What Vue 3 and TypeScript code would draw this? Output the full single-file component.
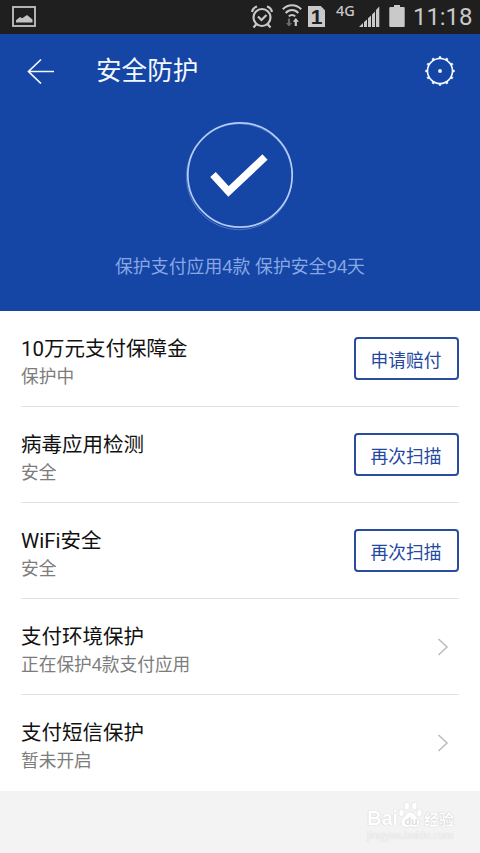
<script setup lang="ts">
interface Item {
  title: string
  note: string
  action?: string
}

const items: Item[] = [
  { title: '10万元支付保障金', note: '保护中', action: '申请赔付' },
  { title: '病毒应用检测', note: '安全', action: '再次扫描' },
  { title: 'WiFi安全', note: '安全', action: '再次扫描' },
  { title: '支付环境保护', note: '正在保护4款支付应用' },
  { title: '支付短信保护', note: '暂未开启' },
]

const teeth: number[] = Array.from({ length: 12 }, (_, i) => i * 30)
</script>

<template>
  <div class="screen">
    <div class="status">
      <svg class="picture" width="24" height="21" viewBox="0 0 24 21">
        <rect x="1" y="1" width="22" height="19" fill="none" stroke="#c3c3c3" stroke-width="1.8" />
        <path d="M4 16.5v-2.200l4-3.300 2.200 1.300L15 9l5.500 4.500v3z" fill="#c3c3c3" />
      </svg>
      <div class="indicators">
        <svg class="alarm" width="22" height="24" viewBox="0 0 22 24" fill="none" stroke="#c9c9c9" stroke-width="2.2">
          <circle cx="11" cy="12.5" r="8.5" />
          <path d="M7 11.5l3.500 3.500 5-5M1 7a7 7 0 0 1 5-5.500M21 7a7 7 0 0 0-5-5.500M5.500 19l-3 3.500M16.500 19l3 3.500" />
        </svg>
        <svg class="wifi" width="20" height="24" viewBox="0 0 20 24">
          <g fill="none" stroke="#c9c9c9" stroke-width="2">
            <path d="M.8 5.200C6-.2 14-.2 19.200 5.200M3.700 9c3.600-3.900 9-3.900 12.600 0M6.800 12.400c1.900-2 4.500-2 6.400 0" />
          </g>
          <path d="M5.900 14.500h2.200v4.500h2L7 22.500 3.900 19h2z" fill="#6b6b6b" />
          <path d="M12.700 22v-4.300h-2l3.100-3.700 3.100 3.700h-2V22z" fill="#c9c9c9" />
        </svg>
        <div class="sim">1</div>
        <div class="network">4G</div>
        <svg class="signal" width="21" height="22" viewBox="0 0 21 22" fill="#c9c9c9">
          <path d="M0 21l4-4v4zM5 16l3-2.500V21H5zM9 12.200l3-2.700V21H9zM13 8.500l3-3V21h-3zM17 4l3.300-3.500V21H17z" />
        </svg>
        <svg class="battery" width="16" height="22" viewBox="0 0 16 22">
          <path d="M5 0h6v2h3.700q1 0 1 1v18q0 1-1 1H1.300q-1 0-1-1V3q0-1 1-1H5z" fill="#c9c9c9" />
        </svg>
        <div class="clock">11:18</div>
      </div>
    </div>

    <header class="hero">
      <div class="bar">
        <svg class="back" width="28" height="26" viewBox="0 0 28 26" fill="none" stroke="#f3f8ff" stroke-width="1.7">
          <path d="M27 13.500H1.500M14 1.500l-12.500 12 12.500 12" />
        </svg>
        <h1>安全防护</h1>
        <svg class="gear" width="30" height="30" viewBox="0 0 30 30">
          <circle cx="15" cy="15" r="12.5" fill="none" stroke="#f3f8ff" stroke-width="1.6" />
          <circle cx="15" cy="15" r="1.9" fill="#f3f8ff" />
          <path
            v-for="angle in teeth"
            :key="angle"
            d="M13.700 2.500L14.300.5h1.400l.6 2z"
            fill="#f3f8ff"
            stroke="#f3f8ff"
            stroke-width=".6"
            :transform="`rotate(${angle} 15 15)`"
          />
        </svg>
      </div>
      <svg class="shield" width="110" height="112" viewBox="0 0 110 112" fill="none">
        <circle cx="54.3" cy="56.7" r="53" stroke="#5d83cc" stroke-width=".8" />
        <circle cx="55" cy="55" r="52.2" stroke="#b4ccf7" stroke-width="1.7" />
        <path d="M28 54.500L43.500 71.500 80 37" stroke="#fff" stroke-width="7.500" />
      </svg>
      <p>保护支付应用4款 保护安全94天</p>
    </header>

    <main class="list">
      <section v-for="item in items" :key="item.title" class="row">
        <div class="copy">
          <h2>{{ item.title }}</h2>
          <span>{{ item.note }}</span>
        </div>
        <button v-if="item.action" type="button">{{ item.action }}</button>
        <svg v-else class="chevron" width="12" height="18" viewBox="0 0 12 18">
          <path d="M1.500 1l8.500 8-8.500 8" fill="none" stroke="#bdbdbd" stroke-width="1.6" />
        </svg>
      </section>
    </main>

    <footer class="foot">
      <div class="mark">
        <div class="brand">
          <span class="bai">Bai</span>
          <svg width="25" height="28" viewBox="0 0 25 28" fill="#fff" stroke="#e0e0e0" stroke-width=".7">
            <ellipse cx="3.5" cy="12" rx="2.8" ry="3.7" />
            <ellipse cx="9" cy="5" rx="2.9" ry="4" />
            <ellipse cx="16.5" cy="5" rx="2.9" ry="4" />
            <ellipse cx="21.5" cy="12" rx="2.8" ry="3.7" />
            <path d="M12.500 11c4 0 4.800 4 7.300 6.300 3.600 3.500 1.900 9-2.500 9-2 0-3-.5-4.800-.5s-2.800.5-4.800.5c-4.400 0-6.100-5.500-2.500-9C7.700 15 8.500 11 12.500 11z" />
            <text x="6.5" y="24" class="du">du</text>
          </svg>
          <span class="cn">经验</span>
        </div>
        <div class="site">jingyan.baidu.com</div>
      </div>
    </footer>
  </div>
</template>

<style>
body {
  margin: 0;
  background: #f3f3f3;
}
</style>

<style scoped>
.screen {
  width: 480px;
  height: 853px;
  overflow: hidden;
  display: flex;
  flex-direction: column;
  background: #f3f3f3;
  font-family: "Noto Sans", "Noto Sans CJK SC", sans-serif;
}

.status {
  height: 34px;
  flex: none;
  display: flex;
  justify-content: space-between;
  background: #1f1f1f;
  padding: 0 8px 0 12px;
  font-family: Roboto, sans-serif;
}

.picture {
  margin-top: 6px;
}

.indicators {
  display: flex;
  align-items: flex-start;
  color: #c9c9c9;
}

.alarm {
  margin: 5px 9px 0 0;
}

.wifi {
  margin: 4px 6px 0 0;
}

.sim {
  width: 17px;
  height: 21px;
  margin: 6px 11px 0 0;
  background: #c9c9c9;
  clip-path: polygon(0 0, 75% 0, 100% 20%, 100% 100%, 0 100%);
  color: #1f1f1f;
  font: bold 21px/22px "Liberation Sans", sans-serif;
  text-align: center;
}

.network {
  width: 19px;
  margin: 3px 4px 0 0;
  font: 500 14.5px/15px "Noto Sans", sans-serif;
}

.signal {
  margin: 6px 9px 0 0;
}

.battery {
  margin: 5px 8px 0 0;
}

.clock {
  width: 59px;
  font-size: 24px;
  line-height: 34px;
  letter-spacing: -0.1px;
}

.hero {
  height: 277px;
  flex: none;
  display: flex;
  flex-direction: column;
  align-items: center;
  background: #1545a5;
}

.bar {
  width: 100%;
  height: 74px;
  box-sizing: border-box;
  padding: 0 25px 0 27px;
  display: flex;
  align-items: center;
}

.bar h1 {
  flex: 1;
  margin: -1px 0 0 41px;
  font-size: 25.6px;
  line-height: 36px;
  font-weight: 400;
  color: #f3f8ff;
}

.shield {
  margin-top: 12px;
}

.hero p {
  margin: 21px 0 0;
  font-size: 17.9px;
  line-height: 26px;
  color: #88a8e3;
}

.list {
  height: 480px;
  flex: none;
  padding: 0 21px;
  background: #fff;
}

.row {
  height: 96px;
  box-sizing: border-box;
  border-bottom: 1px solid #e2e2e2;
  display: flex;
  align-items: center;
  justify-content: space-between;
}

.row:last-child {
  border-bottom-color: transparent;
}

.copy {
  display: flex;
  flex-direction: column;
  padding-top: 7px;
}

.copy h2 {
  margin: 0;
  font-family: Roboto, "Noto Sans CJK SC", sans-serif;
  font-size: 20.5px;
  line-height: 28px;
  font-weight: 400;
  color: #111;
}

.copy span {
  font-size: 17.7px;
  line-height: 26px;
  color: #7c7c7c;
}

button {
  width: 105px;
  height: 43px;
  padding: 2px 1px 0 0;
  box-sizing: border-box;
  border: 2px solid #2a4c9f;
  border-radius: 4px;
  background: #fff;
  color: #2448a0;
  font: 400 17.7px/37px "Noto Sans CJK SC", sans-serif;
}

.chevron {
  margin: 0 10px 0 0;
}

.foot {
  flex: 1;
  display: flex;
  justify-content: flex-end;
  padding: 9px 26px 0 0;
}

.mark {
  width: 87px;
  color: #fff;
}

.brand {
  height: 29px;
  display: flex;
  align-items: flex-end;
}

.bai {
  font: bold 20px/21px "Liberation Sans", sans-serif;
  text-shadow: 0 0 1px #b4b4b4;
}

.du {
  font: bold 11px "Liberation Sans", sans-serif;
  fill: #dedede;
  stroke: none;
}

.cn {
  margin-left: 1px;
  font-size: 15px;
  line-height: 20px;
  font-weight: 700;
  white-space: nowrap;
  text-shadow: 0 0 1px #aaa;
}

.site {
  font-size: 10px;
  line-height: 12px;
  color: #f6f6f6;
  text-shadow: 0 0 1px #c4c4c4;
}
</style>
